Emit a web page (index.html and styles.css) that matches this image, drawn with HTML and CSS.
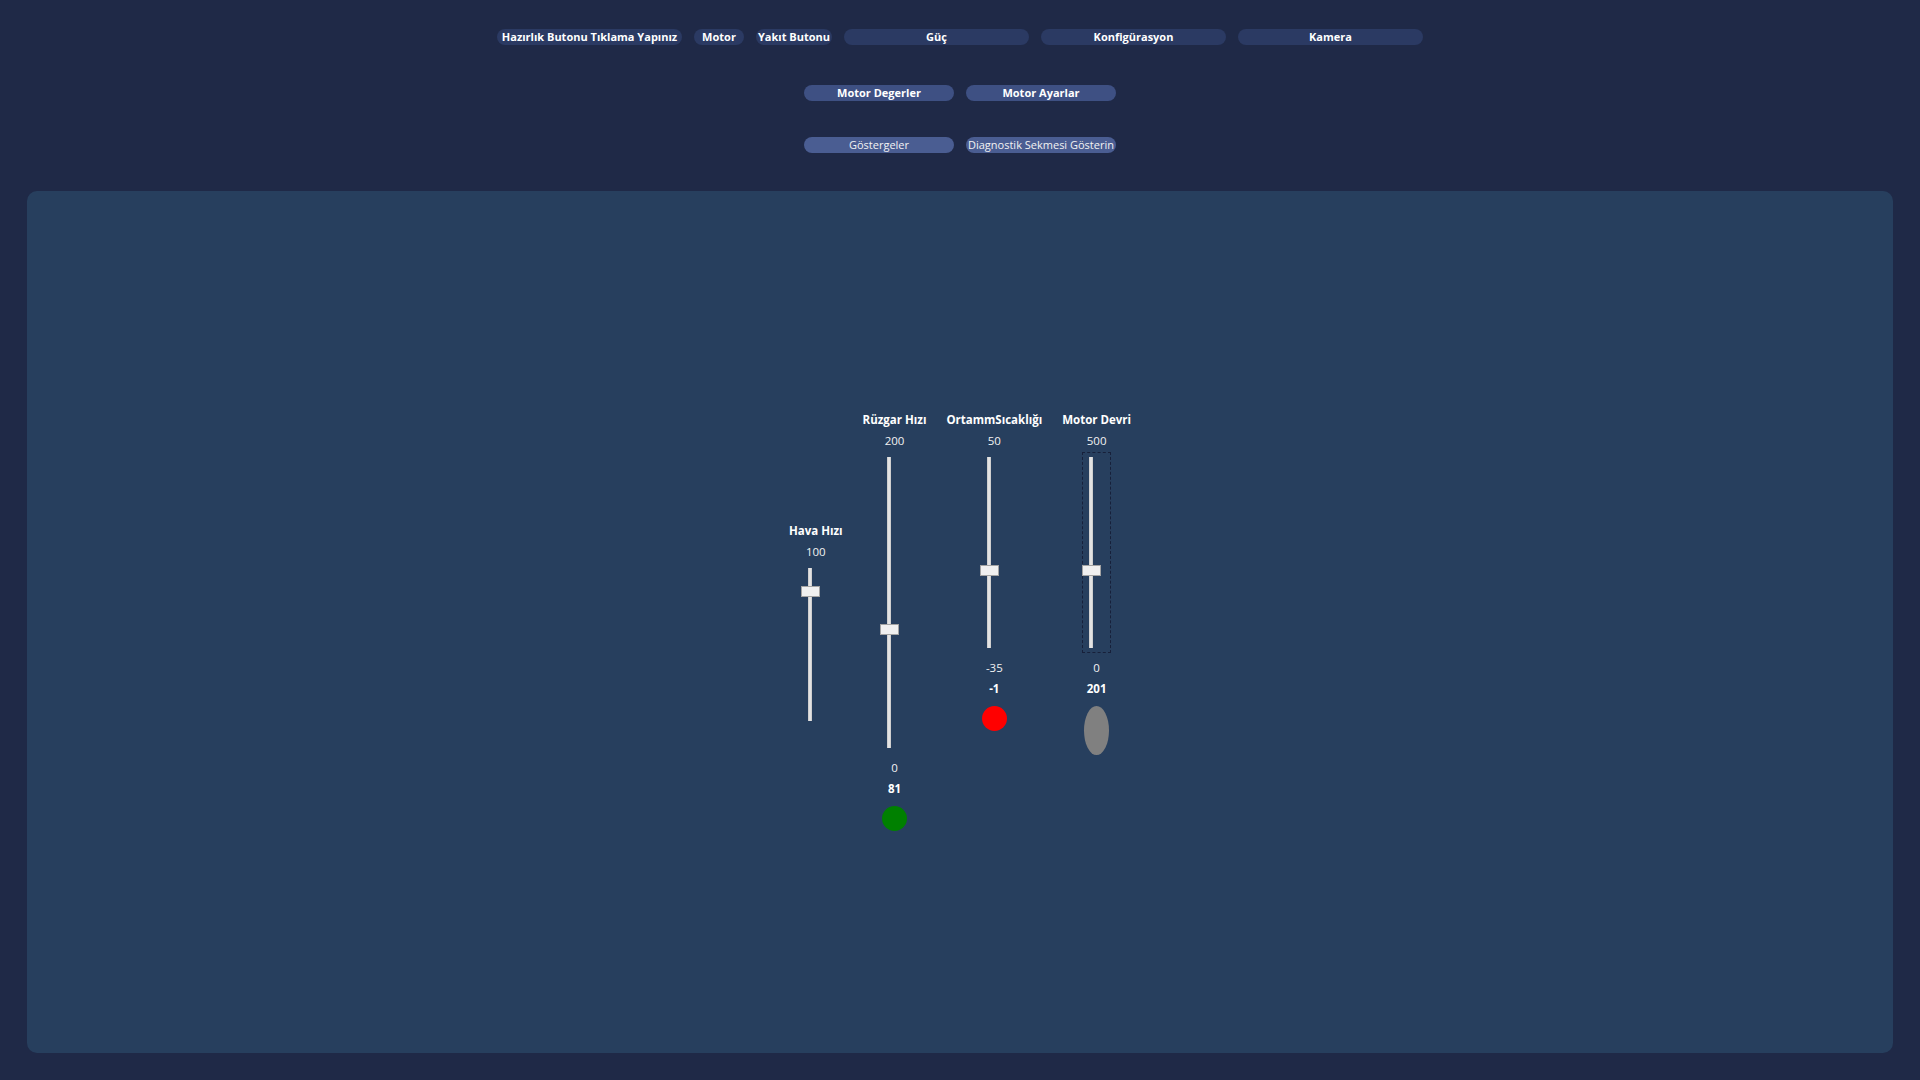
FILE: index.html
```html
<!DOCTYPE html>
<html lang="tr">
<head>
<meta charset="utf-8">
<title>Göstergeler</title>
<link rel="stylesheet" href="styles.css">
</head>
<body>
<div class="page">
  <nav class="row row-top">
    <button class="pill pill-top w-hazir">Hazırlık Butonu Tıklama Yapınız</button>
    <button class="pill pill-top w-motor">Motor</button>
    <button class="pill pill-top w-yakit">Yakıt Butonu</button>
    <button class="pill pill-top w-wide">Güç</button>
    <button class="pill pill-top w-wide">Konfigürasyon</button>
    <button class="pill pill-top w-wide">Kamera</button>
  </nav>
  <nav class="row row-mid">
    <button class="pill pill-mid">Motor Degerler</button>
    <button class="pill pill-mid">Motor Ayarlar</button>
  </nav>
  <nav class="row row-low">
    <button class="pill pill-low">Göstergeler</button>
    <button class="pill pill-low">Diagnostik Sekmesi Gösterin</button>
  </nav>

  <main class="panel">
    <div class="gauges">
      <div class="gauge gauge-solo">
        <div class="g-label">Hava Hızı</div>
        <div class="g-num">100</div>
        <div class="slider s-short">
          <div class="track"></div>
          <div class="thumb" style="--f:0.87"></div>
        </div>
      </div>

      <div class="group">
        <div class="gauge">
          <div class="g-label">Rüzgar Hızı</div>
          <div class="g-num">200</div>
          <div class="slider s-tall">
            <div class="track"></div>
            <div class="thumb" style="--f:0.405"></div>
          </div>
          <div class="g-num g-min">0</div>
          <div class="g-num g-val">81</div>
          <div class="lamp lamp-green"></div>
        </div>

        <div class="gauge">
          <div class="g-label">OrtammSıcaklığı</div>
          <div class="g-num">50</div>
          <div class="slider s-mid">
            <div class="track"></div>
            <div class="thumb" style="--f:0.4"></div>
          </div>
          <div class="g-num g-min">-35</div>
          <div class="g-num g-val">-1</div>
          <div class="lamp lamp-red"></div>
        </div>

        <div class="gauge">
          <div class="g-label">Motor Devri</div>
          <div class="g-num">500</div>
          <div class="slider s-mid s-focus">
            <div class="track"></div>
            <div class="thumb" style="--f:0.402"></div>
          </div>
          <div class="g-num g-min">0</div>
          <div class="g-num g-val">201</div>
          <div class="lamp lamp-grey"></div>
        </div>
      </div>
    </div>
  </main>
</div>
</body>
</html>
```

FILE: styles.css
```css
* { box-sizing: border-box; }

html, body {
  margin: 0;
  padding: 0;
  height: 100%;
}

body {
  background: #1f2947;
  color: #ffffff;
  font-family: "Open Sans", "Noto Sans", "Liberation Sans", sans-serif;
  font-size: 11px;
}

.page {
  display: flex;
  flex-direction: column;
  height: 1080px;
  padding-top: 29px;
}

.row {
  display: flex;
  justify-content: center;
  gap: 12px;
}

.row-mid { margin-top: 40px; }
.row-low { margin-top: 36px; }

.pill {
  height: 16px;
  border: none;
  border-radius: 8px;
  padding: 0;
  font-family: inherit;
  color: #ffffff;
  line-height: 16px;
  white-space: nowrap;
  display: flex;
  align-items: center;
  justify-content: center;
  overflow: visible;
}

.pill-top {
  background: #2b3a63;
  font-weight: 700;
  font-size: 11px;
}

.w-hazir { width: 185px; }
.w-motor { width: 50px; }
.w-yakit { width: 76px; }
.w-wide { width: 185px; }

.pill-mid {
  width: 150px;
  background: #3e5083;
  font-weight: 700;
  font-size: 11px;
}

.pill-low {
  width: 150px;
  background: #4a5d92;
  font-weight: 400;
  font-size: 11px;
  color: #f2f2f2;
}

.panel {
  flex: 1;
  margin: 38px 27px 27px;
  background: #273f5e;
  border-radius: 10px;
  display: flex;
  align-items: center;
  justify-content: center;
}

.gauges {
  display: flex;
  align-items: center;
  gap: 20px;
  margin-top: -4px;
}

.group {
  display: flex;
  align-items: flex-start;
  gap: 20px;
}

.gauge {
  display: flex;
  flex-direction: column;
  align-items: center;
}

.gauge-solo { margin-top: 6px; }

.g-label {
  font-weight: 700;
  font-size: 11.5px;
  line-height: 21px;
  white-space: nowrap;
}

.g-num {
  font-size: 11.5px;
  line-height: 21px;
  color: #f2f2f2;
}

.g-min { margin-top: 4px; }

.g-val {
  font-weight: 700;
  color: #ffffff;
}

.slider {
  position: relative;
  width: 29px;
  padding: 5px 0;
  margin-top: 1px;
  border: 1px dashed transparent;
}

.s-short { height: 163px; }
.s-tall { height: 301px; }
.s-mid { height: 201px; }

.s-focus { border-color: #17203a; }

.track {
  position: absolute;
  left: 6px;
  top: 4px;
  bottom: 4px;
  width: 4px;
  background: #e3e3e3;
  box-shadow: inset 1px 0 0 #cfcfcf, inset -1px 0 0 #cfcfcf;
}

.thumb {
  position: absolute;
  left: -1px;
  width: 19px;
  height: 11px;
  bottom: calc(4px + var(--f) * (100% - 8px - 11px));
  background: #f0f0f0;
  border: 1px solid #a3a3a3;
}

.lamp {
  margin-top: 7px;
  width: 25px;
  height: 25px;
  border-radius: 50%;
}

.lamp-green { background: #008000; }
.lamp-red { background: #ff0000; }
.lamp-grey {
  background: #808080;
  height: 49px;
}
```
